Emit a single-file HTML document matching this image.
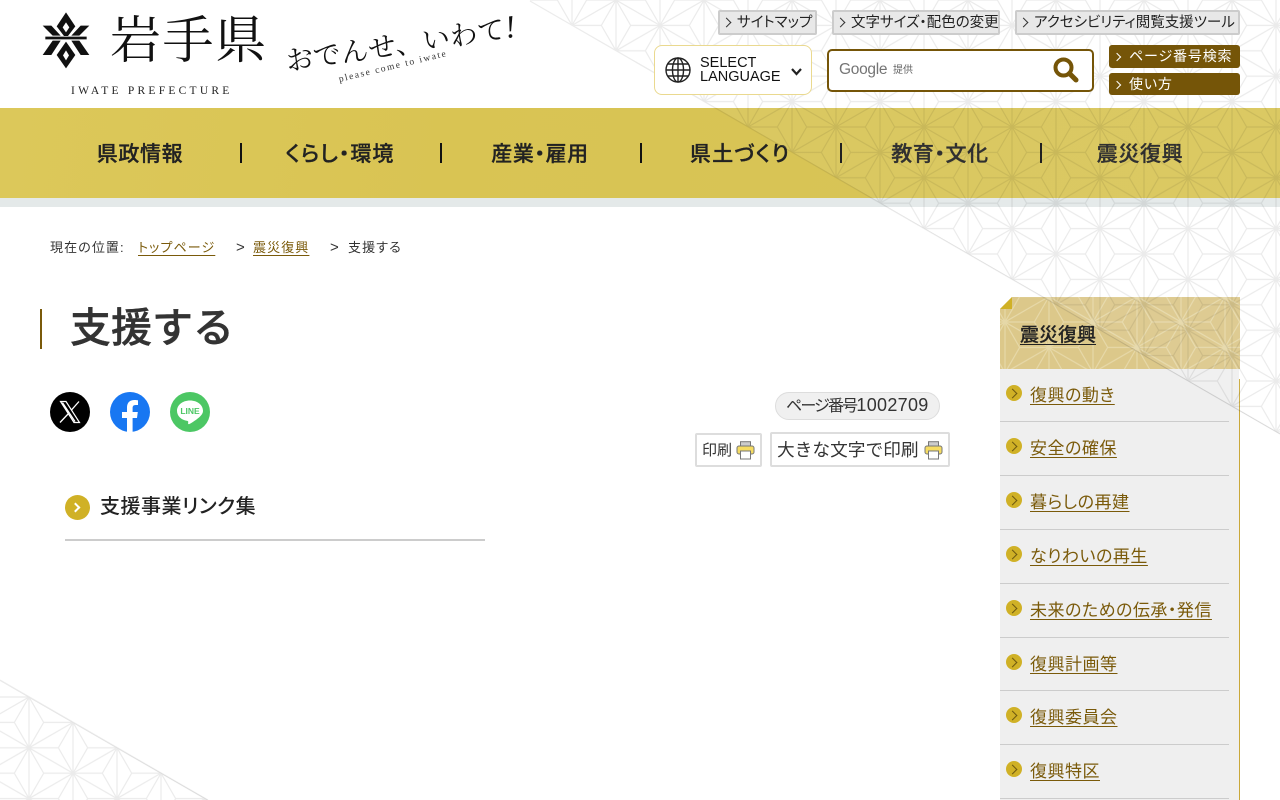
<!DOCTYPE html>
<html lang="ja"><head><meta charset="utf-8"><title>支援する</title>
<style>
*{box-sizing:border-box;margin:0;padding:0}
html,body{width:1280px;height:800px;overflow:hidden;background:#fff}
body{position:relative;font-family:"Liberation Sans","Noto Sans CJK JP",sans-serif;color:#333;font-feature-settings:"palt"}
.a{position:absolute;white-space:nowrap}
a{color:inherit}
#nav{left:0;top:108px;width:1280px;height:90px;background:linear-gradient(100deg,#dcc85a 0,#d9c453 35%,#d8c455 60%,#d9c558 100%)}
#band{left:0;top:198px;width:1280px;height:9px;background:#e4e9e9}
.nt{top:140px;height:30px;line-height:30px;width:200px;text-align:center;font-size:21px;font-weight:500;color:#222;letter-spacing:.6px;-webkit-text-stroke:.3px #222}
.ns{top:143px;width:2px;height:20px;background:#111}
#pat{position:absolute;left:0;top:0;z-index:5;pointer-events:none}
.top{z-index:6}
.tb{top:10px;height:25px;background:#e8e8e8;border:2px solid #ccc;border-radius:2px;font-size:14.5px;line-height:23px;color:#222;padding-left:17px}
.tb:before{content:"";position:absolute;left:3px;top:7px;width:6px;height:6px;border-top:1.3px solid #333;border-right:1.3px solid #333;transform:rotate(45deg)}
.bb{left:1109px;width:131px;background:#755508;border-radius:3px;color:#fff;font-size:14px;letter-spacing:.85px;padding-left:20px;z-index:6}
.bb:before{content:"";position:absolute;left:5px;top:9px;width:5px;height:5px;border-top:1px solid #fff;border-right:1px solid #fff;transform:rotate(45deg)}
.sl{left:1000px;width:229px;height:1px;background:#ccc;z-index:2}
.si{left:1030px;font-size:17px;line-height:24px;color:#7a5a0a;text-decoration:underline;text-underline-offset:3px;z-index:2;letter-spacing:.5px}
.sc{left:1006px;width:16px;height:16px;border-radius:50%;background:#d0b126;z-index:2}
.sc:before{content:"";position:absolute;left:3px;top:5px;width:6px;height:6px;border-top:1.4px solid #6f5a10;border-right:1.4px solid #6f5a10;transform:rotate(45deg)}
.bc{top:239px;font-size:13px;line-height:18px;letter-spacing:1.1px;color:#333}
.bl{color:#7a5a0a;text-decoration:underline;text-underline-offset:3px}
.pb{background:#fff;border:2px solid #ddd;border-radius:2px;color:#333}
</style></head><body>

<!-- logo -->
<svg class="a" style="left:30px;top:5px" width="120" height="70" viewBox="0 0 360 210">
<path fill="#111" fill-rule="evenodd" d="M108 22L136 64 114 93H102L80 64ZM108 52L98 67 108 82 118 67Z"/>
<path fill="#111" d="M38 62H64L92 92H68ZM178 62H152L124 92H148Z"/>
<path fill="#111" d="M46 95H170V103H46Z"/>
<path fill="#111" d="M38 150H64L92 107H68ZM178 150H152L124 107H148Z"/>
<path fill="#111" fill-rule="evenodd" d="M108 110L136 150 108 190 80 150ZM108 136L99 151 108 166 117 151Z"/>
</svg>
<div class="a" style="left:110px;top:7px;font:400 51px/70px 'Liberation Serif','Noto Serif CJK JP',serif;letter-spacing:1.5px;color:#111;font-feature-settings:normal">岩手県</div>
<div class="a" style="left:71px;top:84px;font:400 11.5px/14px 'Liberation Serif',serif;letter-spacing:3.25px;color:#222">IWATE PREFECTURE</div>
<div class="a" style="left:286px;top:38px;font:400 27.5px/44px 'Liberation Serif','Noto Serif CJK JP',serif;letter-spacing:.3px;color:#111;transform:rotate(-8.5deg);transform-origin:0 50%;font-feature-settings:normal">おでんせ、いわて<span style="font-style:italic;font-size:32px">!</span></div>
<div class="a" style="left:339px;top:74px;font:400 9.5px/12px 'Liberation Serif',serif;letter-spacing:1.6px;color:#333;transform:rotate(-13.5deg);transform-origin:0 50%">please come to iwate</div>

<!-- nav -->
<div class="a" id="nav"></div><div class="a" id="band"></div>
<div class="a nt" style="left:40px">県政情報</div><div class="a ns" style="left:240px"></div>
<div class="a nt" style="left:240px;letter-spacing:1px">くらし・環境</div><div class="a ns" style="left:440px"></div>
<div class="a nt" style="left:440px">産業・雇用</div><div class="a ns" style="left:640px"></div>
<div class="a nt" style="left:640px;letter-spacing:1.2px">県土づくり</div><div class="a ns" style="left:840px"></div>
<div class="a nt" style="left:840px">教育・文化</div><div class="a ns" style="left:1040px"></div>
<div class="a nt" style="left:1040px">震災復興</div>

<!-- top tools -->
<div class="a tb top" style="left:718px;width:99px">サイトマップ</div>
<div class="a tb top" style="left:832px;width:168px">文字サイズ・配色の変更</div>
<div class="a tb top" style="left:1015px;width:225px">アクセシビリティ閲覧支援ツール</div>

<div class="a top" style="left:654px;top:45px;width:158px;height:50px;background:#fff;border:1px solid #ead98f;border-radius:8px"></div>
<svg class="a top" style="left:664px;top:56px" width="28" height="28" viewBox="0 0 28 28" fill="none" stroke="#222" stroke-width="1.4"><circle cx="14" cy="14" r="12"/><ellipse cx="14" cy="14" rx="5.5" ry="12"/><path d="M14 2V26M2 14H26M3.6 8H24.4M3.6 20H24.4"/></svg>
<div class="a top" style="left:700px;top:56px;font:400 14.5px/14px 'Liberation Sans',sans-serif;color:#111">SELECT<br>LANGUAGE</div>
<svg class="a top" style="left:790px;top:67px" width="13" height="10" viewBox="0 0 13 10" fill="none" stroke="#222" stroke-width="2.2"><path d="M2 2L6.5 7 11 2"/></svg>

<div class="a top" style="left:827px;top:49px;width:267px;height:43px;background:#fff;border:2px solid #755508;border-radius:5px"></div>
<div class="a top" style="left:839px;top:60px;font:400 15.5px/20px 'Liberation Sans',sans-serif;color:#757575;letter-spacing:-.3px">Google</div>
<div class="a top" style="left:893px;top:63px;font-size:10px;line-height:15px;color:#666">提供</div>
<svg class="a top" style="left:1052px;top:56px" width="27" height="27" viewBox="0 0 27 27" fill="none" stroke="#755508"><circle cx="11.5" cy="11.5" r="8" stroke-width="4"/><path d="M17.5 17.5L24 24" stroke-width="5" stroke-linecap="round"/></svg>

<div class="a bb" style="top:45px;height:23px;line-height:22px">ページ番号検索</div>
<div class="a bb" style="top:73px;height:22px;line-height:22px">使い方</div>

<!-- breadcrumb -->
<div class="a bc" style="left:50px">現在の位置:</div>
<div class="a bc bl" style="left:138px">トップページ</div>
<div class="a bc" style="left:236px;font-size:15px">&gt;</div>
<div class="a bc bl" style="left:253px">震災復興</div>
<div class="a bc" style="left:330px;font-size:15px">&gt;</div>
<div class="a bc" style="left:348px">支援する</div>

<!-- title -->
<div class="a" style="left:40px;top:309px;width:2px;height:40px;background:#7a5a0a"></div>
<div class="a" style="left:70px;top:300px;font-size:41px;line-height:56px;font-weight:500;color:#333;font-feature-settings:normal;-webkit-text-stroke:.4px #333">支援する</div>

<!-- social -->
<svg class="a" style="left:50px;top:392px" width="40" height="40" viewBox="0 0 40 40"><circle cx="20" cy="20" r="20" fill="#000"/><path fill="none" stroke="#fff" stroke-width="1.2" d="M10.5 9.500H16L29.500 30.500H24ZM12.500 10.600L25 29.500"/><path fill="none" stroke="#fff" stroke-width="1.3" d="M29 9.500L21.300 18.200M18.500 21.500L10 30.500"/></svg>
<svg class="a" style="left:110px;top:392px" width="40" height="40" viewBox="0 0 40 40"><circle cx="20" cy="20" r="20" fill="#1877f2"/><path fill="#fff" d="M17 40V26H12V20H17V15.500C17 10.500 20 8 24.400 8 26.200 8 28 8.300 28 8.300V13H25.600C23.200 13 22.600 14.400 22.600 15.900V20H27.800L27 26H22.600V40Z"/></svg>
<svg class="a" style="left:170px;top:392px" width="40" height="40" viewBox="0 0 40 40"><circle cx="20" cy="20" r="20" fill="#4cc764"/><path fill="#fff" d="M20 8.500C12.500 8.500 7 13 7 18.800 7 24 11 28 17.300 28.900 18.500 29.200 18.300 30 18.100 31.200 18 32.200 18.800 32.400 19.600 31.900 22.200 30.400 27 27.400 29.800 24.700 32.200 22.500 33 20.800 33 18.800 33 13 27.500 8.500 20 8.500Z"/><text x="20" y="22" text-anchor="middle" font-family="Liberation Sans" font-weight="700" font-size="8.500" fill="#4cc764">LINE</text></svg>

<!-- page id + print -->
<div class="a" style="left:775px;top:392px;width:165px;height:28px;background:#f0f0f0;border:1px solid #ddd;border-radius:14px;font-size:16px;line-height:25px;padding-left:10px;color:#333;letter-spacing:-1.8px">ページ番号<span style="font-size:18px;letter-spacing:.3px">1002709</span></div>
<div class="a pb" style="left:695px;top:433px;width:67px;height:34px;font-size:15px;line-height:31px;padding-left:5px">印刷</div>
<div class="a pb" style="left:770px;top:432px;width:180px;height:35px;font-size:17.7px;line-height:33px;padding-left:5px;font-feature-settings:normal">大きな文字で印刷</div>
<svg class="a" style="left:736px;top:441px" width="19" height="19" viewBox="0 0 19 19"><rect x="4.500" y=".7" width="10" height="5" fill="#ccc" stroke="#777"/><rect x="1" y="5" width="17" height="8" rx="2" fill="#f6dc62" stroke="#777"/><rect x="4.500" y="10" width="10" height="8" fill="#fff" stroke="#777"/></svg>
<svg class="a" style="left:924px;top:441px" width="19" height="19" viewBox="0 0 19 19"><rect x="4.500" y=".7" width="10" height="5" fill="#ccc" stroke="#777"/><rect x="1" y="5" width="17" height="8" rx="2" fill="#f6dc62" stroke="#777"/><rect x="4.500" y="10" width="10" height="8" fill="#fff" stroke="#777"/></svg>

<!-- link -->
<div class="a" style="left:65px;top:495px;width:25px;height:25px;border-radius:50%;background:#d0b126"></div>
<div class="a" style="left:72px;top:504px;width:7px;height:7px;border-top:2px solid #fff;border-right:2px solid #fff;transform:rotate(45deg)"></div>
<div class="a" style="left:100px;top:492px;font-size:20px;line-height:30px;font-weight:500;color:#222;letter-spacing:.5px">支援事業リンク集</div>
<div class="a" style="left:65px;top:539px;width:420px;height:2px;background:#ccc"></div>

<!-- sidebar -->
<svg class="a" style="left:1000px;top:297px" width="240" height="72" viewBox="0 0 240 72">
<defs><pattern id="p3" patternUnits="userSpaceOnUse" width="88" height="50.800" patternTransform="translate(5 25)"><use href="#tile"/></pattern></defs>
<rect width="240" height="72" fill="#dcc88a"/>
<rect width="240" height="72" fill="url(#p3)" style="filter:invert(1) sepia(1)" opacity=".3"/>
<path d="M0 0H12L0 12Z" fill="#fff"/><path d="M12 0V12H0Z" fill="#d0b126"/>
</svg>
<div class="a" style="left:1020px;top:322px;font-size:19px;line-height:28px;font-weight:500;color:#222;text-decoration:underline;text-underline-offset:3px;-webkit-text-stroke:.2px #222">震災復興</div>
<div class="a" style="left:1000px;top:369px;width:239px;height:431px;background:#efefef"></div>
<div class="a" style="left:1239px;top:379px;width:1px;height:421px;background:#c9a83a"></div>

<div class="a sc" style="top:385px"></div><div class="a si" style="top:384px">復興の動き</div><div class="a sl" style="top:421px"></div>
<div class="a sc" style="top:438px"></div><div class="a si" style="top:437px">安全の確保</div><div class="a sl" style="top:475px"></div>
<div class="a sc" style="top:492px"></div><div class="a si" style="top:491px">暮らしの再建</div><div class="a sl" style="top:529px"></div>
<div class="a sc" style="top:546px"></div><div class="a si" style="top:545px">なりわいの再生</div><div class="a sl" style="top:583px"></div>
<div class="a sc" style="top:600px"></div><div class="a si" style="top:599px">未来のための伝承・発信</div><div class="a sl" style="top:637px"></div>
<div class="a sc" style="top:654px"></div><div class="a si" style="top:653px">復興計画等</div><div class="a sl" style="top:690px"></div>
<div class="a sc" style="top:707px"></div><div class="a si" style="top:706px">復興委員会</div><div class="a sl" style="top:744px"></div>
<div class="a sc" style="top:761px"></div><div class="a si" style="top:760px">復興特区</div><div class="a sl" style="top:798px"></div>

<!-- asanoha overlay -->
<svg id="pat" width="1280" height="800" viewBox="0 0 1280 800">
<defs>
<g id="tile" fill="none" stroke="#000" stroke-width="1.200">
<path d="M0 0V50.800M88 0V50.800M44 -25.400V76.200M0 0L44 25.400 88 50.800M0 50.800L44 25.400 88 0M0 0L44 -25.400 88 0M0 50.800L44 76.200 88 50.800"/>
<path d="M14.670 25.400L0 0M14.670 25.400L0 50.800M14.670 25.400H44M73.330 25.400L88 0M73.330 25.400L88 50.800M73.330 25.400H44"/>
<path d="M29.330 0H0M29.330 0L44 25.400M29.330 0L44 -25.400M58.670 0H88M58.670 0L44 25.400M58.670 0L44 -25.400"/>
<path d="M29.330 50.800H0M29.330 50.800L44 25.400M29.330 50.800L44 76.200M58.670 50.800H88M58.670 50.800L44 25.400M58.670 50.800L44 76.200"/>
</g>
<pattern id="p1" patternUnits="userSpaceOnUse" width="88" height="50.800"><use href="#tile"/></pattern>
<pattern id="p2" patternUnits="userSpaceOnUse" width="88" height="50.800" patternTransform="translate(29 697)"><use href="#tile"/></pattern>
</defs>
<polygon points="528,-1 1281,-1 1281,435" fill="#fff" fill-opacity=".07"/>
<polygon points="528,-1 1281,-1 1281,435" fill="url(#p1)" opacity=".08"/>
<path d="M530 1L1280 434" stroke="#000" stroke-opacity=".08" stroke-width="1.200"/>
<polygon points="-1,680 210,801 -1,801" fill="url(#p2)" opacity=".08"/>
<path d="M0 680L208 800" stroke="#000" stroke-opacity=".08" stroke-width="1.200"/>
</svg>
</body></html>
